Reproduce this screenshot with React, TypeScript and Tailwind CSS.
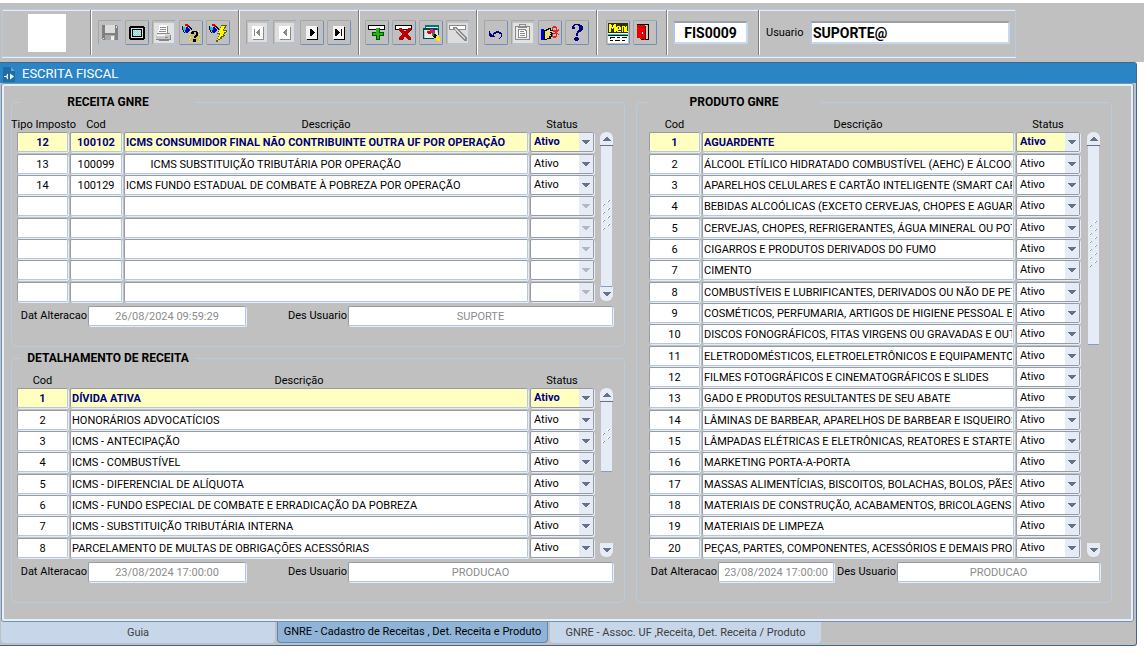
import type { ReactNode } from 'react';

type Row = { key: string; tipo?: string; cod: string; desc: string; status: string };

const receitas: Row[] = [
  { key: 'r1', tipo: '12', cod: '100102', desc: 'ICMS CONSUMIDOR FINAL NÃO CONTRIBUINTE OUTRA UF POR OPERAÇÃO', status: 'Ativo' },
  { key: 'r2', tipo: '13', cod: '100099', desc: '         ICMS SUBSTITUIÇÃO TRIBUTÁRIA POR OPERAÇÃO', status: 'Ativo' },
  { key: 'r3', tipo: '14', cod: '100129', desc: 'ICMS FUNDO ESTADUAL DE COMBATE À POBREZA POR OPERAÇÃO', status: 'Ativo' },
  ...[4, 5, 6, 7, 8].map((n) => ({ key: 'r' + n, tipo: '', cod: '', desc: '', status: '' })),
];

const toRows = (prefix: string, names: string[]): Row[] =>
  names.map((desc, i) => ({ key: prefix + i, cod: String(i + 1), desc, status: 'Ativo' }));

const detalhes = toRows('d', [
  'DÍVIDA ATIVA',
  'HONORÁRIOS ADVOCATÍCIOS',
  'ICMS - ANTECIPAÇÃO',
  'ICMS - COMBUSTÍVEL',
  'ICMS - DIFERENCIAL DE ALÍQUOTA',
  'ICMS - FUNDO ESPECIAL DE COMBATE E ERRADICAÇÃO DA POBREZA',
  'ICMS - SUBSTITUIÇÃO TRIBUTÁRIA INTERNA',
  'PARCELAMENTO DE MULTAS DE OBRIGAÇÕES ACESSÓRIAS',
]);

const produtos = toRows('p', [
  'AGUARDENTE',
  'ÁLCOOL ETÍLICO HIDRATADO COMBUSTÍVEL (AEHC) E ÁLCOOL',
  'APARELHOS CELULARES E CARTÃO INTELIGENTE (SMART CARD)',
  'BEBIDAS ALCOÓLICAS (EXCETO CERVEJAS, CHOPES E AGUARDENTE)',
  'CERVEJAS, CHOPES, REFRIGERANTES, ÁGUA MINERAL OU POTÁVEL',
  'CIGARROS E PRODUTOS DERIVADOS DO FUMO',
  'CIMENTO',
  'COMBUSTÍVEIS E LUBRIFICANTES, DERIVADOS OU NÃO DE PETRÓLEO',
  'COSMÉTICOS, PERFUMARIA, ARTIGOS DE HIGIENE PESSOAL E TOUCADOR',
  'DISCOS FONOGRÁFICOS, FITAS VIRGENS OU GRAVADAS E OUTROS',
  'ELETRODOMÉSTICOS, ELETROELETRÔNICOS E EQUIPAMENTOS',
  'FILMES FOTOGRÁFICOS E CINEMATOGRÁFICOS E SLIDES',
  'GADO E PRODUTOS RESULTANTES DE SEU ABATE',
  'LÂMINAS DE BARBEAR, APARELHOS DE BARBEAR E ISQUEIROS',
  'LÂMPADAS ELÉTRICAS E ELETRÔNICAS, REATORES E STARTERS',
  'MARKETING PORTA-A-PORTA',
  'MASSAS ALIMENTÍCIAS, BISCOITOS, BOLACHAS, BOLOS, PÃES',
  'MATERIAIS DE CONSTRUÇÃO, ACABAMENTOS, BRICOLAGENS',
  'MATERIAIS DE LIMPEZA',
  'PEÇAS, PARTES, COMPONENTES, ACESSÓRIOS E DEMAIS PRODUTOS',
]);

const field =
  'block h-[20px] w-full rounded-[2px] border border-t-[#969ca6] border-l-[#969ca6] border-r-[#b4c6e0] border-b-[#b4c6e0] shadow-[1px_1px_0_#e6edf7] outline-none';

function Cell({ value, label, active, center }: { value: string; label: string; active: boolean; center?: boolean }) {
  return (
    <td className="p-0 pr-0.5 align-top">
      <input
        aria-label={label}
        defaultValue={value}
        className={`${field} px-px ${center ? 'text-center' : ''} ${active ? 'bg-[#ffffc0] font-bold text-[#000080]' : 'bg-white text-black'}`}
      />
    </td>
  );
}

function StatusCell({ value, active }: { value: string; active: boolean }) {
  return (
    <td className="p-0 pr-0.5 align-top">
      <div className="relative">
        <select
          aria-label="Status"
          defaultValue={value}
          disabled={!value}
          className={`block h-[20px] w-full appearance-none rounded-[2px] border border-[#969ca6] pl-[3px] opacity-100 shadow-[1px_1px_0_#e6edf7] outline-none ${active ? 'bg-[#ffffc0] font-bold text-[#000080]' : 'bg-white text-black'}`}
        >
          <option value={value}>{value}</option>
          <option value="Inativo">Inativo</option>
        </select>
        <span className="pointer-events-none absolute inset-y-px right-px flex w-[14px] items-center justify-center bg-[#e6ecf5]">
          <svg width="8" height="4" viewBox="0 0 8 4" shapeRendering="crispEdges">
            <path d="M0 0h8v1H0zM1 1h6v1H1zM2 2h4v1H2zM3 3h2v1H3z" fill={value ? '#66718a' : '#b3b7bf'} />
          </svg>
        </span>
      </div>
    </td>
  );
}

function Grid({ rows, tipo }: { rows: Row[]; tipo?: boolean }) {
  return (
    <table className="w-full flex-1 table-fixed border-collapse">
      <colgroup>
        {tipo && <col className="w-[53px]" />}
        <col className={tipo ? 'w-[54px]' : 'w-[53px]'} />
        <col />
        <col className="w-[66px]" />
      </colgroup>
      <thead>
        <tr className="h-[14px] leading-[14px] whitespace-nowrap">
          {tipo && (
            <th className="p-0 font-normal">
              <div className="-mx-2 text-center">Tipo Imposto</div>
            </th>
          )}
          <th className="p-0 pr-0.5 font-normal">Cod</th>
          <th className="p-0 pr-0.5 font-normal">Descrição</th>
          <th className="p-0 pr-0.5 font-normal">Status</th>
        </tr>
      </thead>
      <tbody>
        {rows.map((r, i) => (
          <tr key={r.key} className="h-[21px] nth-[3n+1]:h-[22px]">
            {tipo && <Cell label="Tipo Imposto" value={r.tipo ?? ''} active={i === 0} center />}
            <Cell label="Cod" value={r.cod} active={i === 0} center />
            <Cell label="Descrição" value={r.desc} active={i === 0} />
            <StatusCell value={r.status} active={i === 0} />
          </tr>
        ))}
      </tbody>
    </table>
  );
}

function Grip({ rows }: { rows: number }) {
  return (
    <svg width="9" height={rows * 8} viewBox={`0 0 9 ${rows * 8}`} shapeRendering="crispEdges">
      {Array.from({ length: rows }, (_, i) => (
        <g key={i}>
          <path d={`M5 ${i * 8}h2v1h-1v1h-1zM0 ${i * 8 + 4}h2v1h-1v1h-1z`} fill="#ffffff" />
          <path d={`M7 ${i * 8}h1v1h-1zM6 ${i * 8 + 1}h1v1h-1zM2 ${i * 8 + 4}h1v1h-1zM1 ${i * 8 + 5}h1v1h-1z`} fill="#7f9dc2" />
        </g>
      ))}
    </svg>
  );
}

function ScrollBar({ thumb, grip }: { thumb: string; grip: number }) {
  return (
    <div className="flex w-[13px] flex-col items-center pt-[14px] pb-[2px]">
      <button aria-label="Rolar para cima" className="flex h-[14px] w-[13px] shrink-0 items-center justify-center rounded-t-[6px] border-b border-[#66718a] bg-[#e6ecf5]">
        <svg width="8" height="4" viewBox="0 0 8 4" shapeRendering="crispEdges">
          <path d="M3 0h2v1H3zM2 1h4v1H2zM1 2h6v1H1zM0 3h8v1H0z" fill="#66718a" />
        </svg>
      </button>
      <div className={`flex w-[11px] items-center justify-center border-b border-[#7f9fc4] bg-[#e6ecf5] ${thumb}`}>
        <Grip rows={grip} />
      </div>
      <button aria-label="Rolar para baixo" className="mt-auto flex h-[14px] w-[13px] shrink-0 items-center justify-center rounded-b-[6px] bg-[#e6ecf5]">
        <svg width="8" height="4" viewBox="0 0 8 4" shapeRendering="crispEdges">
          <path d="M0 0h8v1H0zM1 1h6v1H1zM2 2h4v1H2zM3 3h2v1H3z" fill="#66718a" />
        </svg>
      </button>
    </div>
  );
}

type GroupProps = {
  id: string;
  title: string;
  rows: Row[];
  tipo?: boolean;
  thumb: string;
  grip: number;
  data: string;
  usuario: string;
  narrow?: boolean;
};

function Group({ id, title, rows, tipo, thumb, grip, data, usuario, narrow }: GroupProps) {
  return (
    <fieldset className={`min-w-0 rounded-[5px] border border-[#b9cbe2] pt-2 pr-[11px] pb-5 ${narrow ? 'pl-3' : 'pl-[5px]'}`}>
      <legend className={narrow ? 'ml-[-2px]' : 'ml-1'}>
        <span className="block w-[174px] text-center text-[12px] leading-[16px] font-bold whitespace-nowrap">{title}</span>
      </legend>
      <div className={`flex ${narrow ? 'gap-[5px]' : 'gap-[4px]'}`}>
        <Grid rows={rows} tipo={tipo} />
        <ScrollBar thumb={thumb} grip={grip} />
      </div>
      <div className="mt-[3px] flex items-center whitespace-nowrap">
        <label htmlFor={id + '-data'} className={`shrink-0 pr-px text-right ${narrow ? 'w-[69px]' : 'w-[71px]'}`}>
          Dat Alteracao
        </label>
        <div className={`shrink-0 ${narrow ? 'w-[116px]' : 'w-[158px]'}`}>
          <input id={id + '-data'} readOnly value={data} className={`${field} bg-white text-center text-[#8c8c8c]`} />
        </div>
        <label htmlFor={id + '-usuario'} className={`shrink-0 pr-px text-right ${narrow ? 'w-[63px]' : 'w-[102px]'}`}>
          Des Usuario
        </label>
        <div className="min-w-0 flex-1">
          <input id={id + '-usuario'} readOnly value={usuario} className={`${field} bg-white text-center text-[#8c8c8c]`} />
        </div>
      </div>
    </fieldset>
  );
}

function Tool({ label, off, children }: { label: string; off?: boolean; children: ReactNode }) {
  return (
    <button
      aria-label={label}
      title={label}
      className={`flex h-[25px] w-[24px] items-center justify-center rounded-[2px] border border-t-[#a6a6a6] border-l-[#a6a6a6] ${off ? 'border-r-[#b3c5de] border-b-[#b3c5de]' : 'border-r-[#6d8fb8] border-b-[#6d8fb8]'}`}
    >
      <svg width="22" height="22" viewBox="0 0 22 22" shapeRendering="crispEdges">
        {children}
      </svg>
    </button>
  );
}

function Section({ children, pad }: { children: ReactNode; pad: string }) {
  return (
    <div className={`flex h-[45px] items-center gap-[3px] border-r border-[#808080] shadow-[1px_0_0_#fff] ${pad}`}>{children}</div>
  );
}

function NavPage({ off, d }: { off?: boolean; d: string }) {
  return (
    <>
      {off && <path d="M1 1h19v19H1z" fill="#dedede" />}
      <path d="M6 5h11v13H6z" fill={off ? '#8a8a8a' : '#000'} />
      <path d="M5 4h11v13H5z" fill={off ? '#fff' : '#f4f4f4'} />
      <path d={d} fill={off ? '#8a8a8a' : '#000'} />
    </>
  );
}

function Bottle() {
  return (
    <>
      <path d="M5 2h3v1h1v2H7V4H5z" fill="#e00000" />
      <path d="M3 5h2v1h1v1h1v3H6v1H5V9H4V8H3z" fill="#00c8d8" />
      <path d="M6 5h2v1h1v1h1v2H9v1H8v1H6v-1H5V8h1z" fill="#0000c0" />
      <path d="M8 4h2v1h1v1h1v2h-1V7h-1V6H9V5H8zM2 4h1v4H2zM3 8h1v2H3zM4 10h1v1H4z" fill="#101010" />
    </>
  );
}

function Toolbar() {
  return (
    <div className="flex items-start bg-[#c0c0c0] pt-[6px] pb-[5px] pl-[2px]">
      <div className="flex h-[48px] items-start border border-[#b4cbe6] shadow-[inset_0_1px_0_#e6edf7,0_1px_0_#e6edf7]">
        <Section pad="w-[88px] justify-center">
          <div className="size-[38px] bg-white" />
        </Section>
        <Section pad="pl-[7px] pr-2">
          <Tool label="Salvar" off>
            <path d="M3 3h15v1h1v14H4v-1H3z" fill="#808080" />
            <path d="M6 3h10v8H6z" fill="#dcdcdc" />
            <path d="M6 13h10v5H6z" fill="#a8a8a8" />
            <path d="M12 14h3v4h-3z" fill="#ececec" />
            <path d="M17 4h1v2h-1zM4 16h1v1H4z" fill="#e0e0e0" />
          </Tool>
          <Tool label="Limpar tela">
            <path d="M4 4h14v1h1v12h-1v1H4v-1H3V5h1z" fill="#000" />
            <path d="M5 6h12v10H5z" fill="#d8d8d8" />
            <path d="M6 7h10v8H6z" fill="#000" />
            <path d="M7 8h8v6H7z" fill="#70dce4" />
            <path d="M7 8h1v1H7zM9 8h1v1H9zM11 8h1v1h-1zM13 8h1v1h-1zM8 9h1v1H8zM10 9h1v1h-1zM12 9h1v1h-1zM14 9h1v1h-1zM7 10h1v1H7zM9 10h1v1H9zM11 10h1v1h-1zM13 10h1v1h-1zM8 11h1v1H8zM10 11h1v1h-1zM12 11h1v1h-1zM14 11h1v1h-1zM7 12h1v1H7zM9 12h1v1H9zM11 12h1v1h-1zM13 12h1v1h-1zM8 13h1v1H8zM10 13h1v1h-1zM12 13h1v1h-1zM14 13h1v1h-1z" fill="#e6dcd8" />
          </Tool>
          <Tool label="Imprimir" off>
            <path d="M1 1h20v20H1z" fill="#e2e2e2" />
            <path d="M6 3h9v9H5V8h1z" fill="#fff" />
            <path d="M7 5h6v1H7zM7 7h6v1H7zM6 9h7v1H6zM14 4h1v8h-1zM4 11h13v1H4z" fill="#8c8c8c" />
            <path d="M3 13h15v4H3z" fill="#c8c8c8" />
            <path d="M3 17h15v1H3zM17 13h1v4h-1zM6 18h10v1H6zM12 15h3v1h-3z" fill="#858585" />
            <path d="M4 13h8v1H4z" fill="#fff" />
          </Tool>
          <Tool label="Entrar consulta">
            <Bottle />
            <path d="M9 9h11v11H9z" fill="#c8c078" />
            <path d="M10 9h1v1h-1zM12 9h1v1h-1zM18 9h1v1h-1zM9 12h1v1H9zM19 12h1v1h-1zM10 15h1v1h-1zM18 15h1v1h-1zM10 19h1v1h-1zM18 19h1v1h-1zM9 17h1v1H9zM19 17h1v1h-1z" fill="#ffff30" />
            <path d="M12 9h5v1h1v4h-1v1h-1v1h-2v-2h1v-1h1v-3h-2v2h-3v-2h1zM13 17h3v3h-3z" fill="#000" />
          </Tool>
          <Tool label="Executar consulta">
            <Bottle />
            <path d="M14 3h6v1h-1v2h-1v1h-1v1h3v2h-1v1h-1v1h-1v1h1v1h-1v1h-2v2h-2v1h-2v2H9v-2h1v-2h1v-2h1v-2h-2v-1h1V9h1V7h1V5h1z" fill="#606000" />
            <path d="M14 4h4v1h-1v2h-1v2h3v1h-2v2h-1v2h-2v1h-1v2h-2v1h-1v-1h1v-2h1v-2h1v-2h-2v-1h1V8h1V6h1z" fill="#ffff00" />
          </Tool>
        </Section>
        <Section pad="px-[7px]">
          <Tool label="Primeiro registro" off>
            <NavPage off d="M7 7h1v7H7zM12 7h1v7h-1v-1h-1v-1h-1v-1H9v-1h1V9h1V8h1z" />
          </Tool>
          <Tool label="Registro anterior" off>
            <NavPage off d="M12 7h1v7h-1v-1h-1v-1h-1v-1H9v-1h1V9h1V8h1z" />
          </Tool>
          <Tool label="Próximo registro">
            <NavPage d="M9 7h2v1h1v1h1v1h1v1h-1v1h-1v1h-1v1H9z" />
          </Tool>
          <Tool label="Último registro">
            <NavPage d="M7 7h2v1h1v1h1v1h1v1h-1v1h-1v1H9v1H7zM13 7h1v7h-1z" />
          </Tool>
        </Section>
        <Section pad="px-1.5">
          <Tool label="Inserir registro">
            <path d="M2 3h17v5H2z" fill="#000" />
            <path d="M3 4h15v3H3z" fill="#fff" />
            <path d="M10 6h4v4h4v4h-4v4h-4v-4H6v-4h4z" fill="#005000" />
            <path d="M10 6h3v5h4v2h-4v4h-2v-4H7v-2h3z" fill="#20b818" />
          </Tool>
          <Tool label="Remover registro">
            <path d="M2 3h17v5H2z" fill="#000" />
            <path d="M3 4h15v3H3z" fill="#fff" />
            <path d="M6 6h3v1h1v1h1v1h2V8h1V7h1V6h3v3h-1v1h-1v1h-1v2h1v1h1v1h1v3h-3v-1h-1v-1h-1v-1h-2v1h-1v1H9v1H6v-3h1v-1h1v-1h1v-2H8v-1H7V9H6z" fill="#c00000" />
            <path d="M17 8h1v1h-1zM16 9h1v1h-1zM10 16h1v1h-1zM9 17h1v1H9zM17 17h1v1h-1z" fill="#600000" />
          </Tool>
          <Tool label="Duplicar registro">
            <path d="M5 3h14v5H5z" fill="#007878" />
            <path d="M6 5h12v1H6zM3 7h14v2H3z" fill="#d8f0f0" />
            <path d="M3 6h14v2H3zM3 8h1v9H3zM4 16h10v1H4zM18 7h1v6h-1z" fill="#004848" />
            <path d="M5 9h12v1h1v4h-2v2H5z" fill="#e8e8e8" />
            <path d="M8 8h3v2H8z" fill="#f0e000" />
            <path d="M10 7h3v1h2v4h-3v-1h-2z" fill="#e01090" />
            <path d="M7 9h3v1h1v2H8v-1H7z" fill="#e00000" />
            <path d="M12 11h3v3h-3z" fill="#00a020" />
            <path d="M14 12h2v1h1v3h-3v-1h-1v-1h1z" fill="#000" />
            <path d="M16 14h3v2h1v3h-3v-1h-1z" fill="#ffe800" />
          </Tool>
          <Tool label="Limpar registro" off>
            <path d="M1 1h20v20H1z" fill="#dcdcdc" />
            <path d="M2 3h17v5H2z" fill="#8a8a8a" />
            <path d="M3 4h15v3H3z" fill="#fff" />
            <path d="M6 5h4v1h1v1h1v1h1v1h1v1h1v1h1v1h1v1h1v1h1v1h1v4h-3v-1h-1v-1h-1v-1h-1v-1h-1v-1h-1v-1h-1v-1h-1v-1H9V9H8V8H7V7H6z" fill="#8c8c8c" />
            <path d="M8 6h1v1h1v1h1v1h1v1h1v1h1v1h1v1h1v1h1v1h1v2h-1v-1h-1v-1h-1v-1h-1v-1h-1v-1h-1v-1h-1v-1h-1V9H9V8H8z" fill="#d4d4d4" />
          </Tool>
        </Section>
        <Section pad="px-[7px]">
          <Tool label="Desfazer">
            <path d="M4 9h1v2h1v1h1v1h2v1h1v1H5v-1H4zM8 11h1v-1h2V9h3v1h2v1h1v4h-1v1h-1v1h-1v-1h1v-1h1v-3h-2v-1h-3v1h-2v1H8z" fill="#000080" />
          </Tool>
          <Tool label="Colar" off>
            <path d="M1 1h20v20H1z" fill="#e2e2e2" />
            <path d="M3 4h4V2h7v2h4v14H3z" fill="#8a8a8a" />
            <path d="M4 5h13v12H4zM8 3h5v1H8z" fill="#ececec" />
            <path d="M6 4h9v2H6zM6 7h8v1h1v8H6z" fill="#8a8a8a" />
            <path d="M7 8h6v1h1v6H7z" fill="#fff" />
            <path d="M8 9h4v1H8zM8 11h5v1H8zM8 13h5v1H8z" fill="#8a8a8a" />
          </Tool>
          <Tool label="Recortar">
            <path d="M2 7h3v11H2z" fill="#0000d0" />
            <path d="M5 8h2V7h2V6h3v2h5v2h-4v1h1v2h-1v2h-1v2H8v1H5z" fill="#000" />
            <path d="M6 9h2V8h2V7h1v2h4v1h-4v1h1v1h-1v1h1v1h-2v2H8v1H6z" fill="#e8e060" />
            <path d="M14 4h3v1h1v3h1V7h1v2h-1v1h-1v1h1v1h1v1h-1v-1h-1v3h-1v1h-3v-1h-1v-3h1v-1h2v-1h-2V8h-1V5h1zM14 6v2h3V6zM14 12v2h3v-2z" fill="#f02020" fillRule="evenodd" />
          </Tool>
          <Tool label="Ajuda">
            <path d="M8 2h6v1h2v1h1v4h-1v1h-1v1h-2v1h-1v3h-2v-3h1V9h1V8h1V4h-1V3H9v1H8v1h1v2H6V4h1V3h1zM9 15h3v1h1v2h-1v1H9v-1H8v-2h1z" fill="#000080" />
          </Tool>
        </Section>
        <Section pad="px-[9px]">
          <Tool label="Menu">
            <path d="M1 1h20v10H1z" fill="#303000" />
            <path d="M2 2h2v1h1v2h1V3h1V2h2v8H7V6H6v1H5V6H4v4H2zM10 4h3v1h1v3h-3v1h3v1h-4V9h-1V5h1zM11 5v2h1V5zM15 4h3v1h1v5h-2V5h-1v5h-1z" fill="#ffff00" fillRule="evenodd" />
            <path d="M19 4h1v5h1v1h-2z" fill="#ffff00" />
            <path d="M1 11h20v10H1z" fill="#fff" />
            <path d="M1 12h20v1H1z" fill="#00d8e8" />
            <path d="M1 13h20v1H1zM3 15h5v1H3zM3 15h1v2H3zM10 15h3v1h-3zM15 15h5v1h-5zM3 18h3v1H3zM8 18h5v1H8zM15 18h3v1h-3z" fill="#000" />
          </Tool>
          <Tool label="Sair">
            <path d="M3 2h12v16H7v-1h7V3H3z" fill="#000" />
            <path d="M10 3h4v14h-4z" fill="#c8c8c8" />
            <path d="M3 3h8v1h1v14h-2v-1H6v-1H3z" fill="#e80000" />
            <path d="M11 4h1v14h-1z" fill="#600000" />
            <path d="M8 10h1v2H8z" fill="#fff" />
          </Tool>
        </Section>
        <Section pad="pl-1.5 pr-[10px]">
          <input aria-label="Programa" readOnly value="FIS0009" className="h-[23px] w-[75px] rounded-[2px] border-2 border-t-[#9a9fa8] border-l-[#b4c6e0] border-r-[#c8d8ec] border-b-[#c8d8ec] bg-white text-center text-[14px] font-bold outline-none" />
        </Section>
        <div className="flex h-[45px] items-center pr-[5px] pl-[7px]">
          <label htmlFor="usuario" className="w-[44px]">
            Usuario
          </label>
          <input id="usuario" defaultValue="SUPORTE@" className="h-[23px] w-[200px] rounded-[2px] border-2 border-t-[#9a9fa8] border-l-[#b4c6e0] border-r-[#c8d8ec] border-b-[#c8d8ec] bg-white px-px text-[14px] font-bold outline-none" />
        </div>
      </div>
    </div>
  );
}

export default function App() {
  return (
    <div className="min-h-screen bg-white pt-[3px] font-[Roboto,'Liberation_Sans',sans-serif] text-[11px] leading-[14px] text-black">
      <Toolbar />
      <main className="mr-[7px] rounded-tr-[3px] rounded-br-[3px] border-t border-r border-b border-[#44658f] bg-[#c0c0c0]">
        <h1 className="flex h-[20px] items-center gap-[7px] bg-[#2b84c4] pt-px pl-[3px] text-[13px] font-normal text-white">
          <svg width="12" height="16" viewBox="0 0 12 16">
            <path d="M0 1h8l4 4v11H0z" fill="#1d6ea8" />
            <path d="M8 1l4 4H8z" fill="#63a6d8" />
            <path d="M5 7.5a3.5 3.5 0 0 0 0 6v-2a1.5 1.5 0 0 1 0-2zM7 7.5l4 3-4 3z" fill="#fff" />
            <path d="M1 10h3v1H1z" fill="#fff" />
          </svg>
          ESCRITA FISCAL
        </h1>
        <div className="mr-[2px] ml-px rounded-[3px] border border-[#6f93bb]">
          <div className="grid grid-cols-[614fr_476fr] gap-[11px] rounded-[2px] border-2 border-[#e8eef6] pt-2 pr-[19px] pb-4 pl-[7px]">
            <div className="flex min-w-0 flex-col gap-[3px]">
              <Group id="receita" title="RECEITA GNRE" rows={receitas} tipo thumb="flex-1" grip={4} data="26/08/2024 09:59:29" usuario="SUPORTE" />
              <Group id="detalhe" title="DETALHAMENTO DE RECEITA" rows={detalhes} thumb="h-[70px]" grip={2} data="23/08/2024 17:00:00" usuario="PRODUCAO" />
            </div>
            <Group id="produto" title="PRODUTO GNRE" rows={produtos} thumb="h-[199px]" grip={6} data="23/08/2024 17:00:00" usuario="PRODUCAO" narrow />
          </div>
        </div>
        <nav className="flex h-[23px] items-start gap-[2px] pl-px text-[#404040]" role="tablist">
          <button role="tab" aria-selected="false" className="h-[21px] w-[274px] rounded-b-[4px] bg-[#c8d6e9]">
            Guia
          </button>
          <button role="tab" aria-selected="true" className="h-[21px] w-[271px] rounded-b-[4px] border-x border-b border-[#5f87b4] bg-[#8fb4d8] whitespace-nowrap text-black">
            GNRE - Cadastro de Receitas , Det. Receita e Produto
          </button>
          <button role="tab" aria-selected="false" className="h-[21px] w-[271px] rounded-b-[4px] bg-[#c8d6e9] whitespace-nowrap">
            GNRE - Assoc. UF ,Receita, Det. Receita / Produto
          </button>
        </nav>
      </main>
    </div>
  );
}
